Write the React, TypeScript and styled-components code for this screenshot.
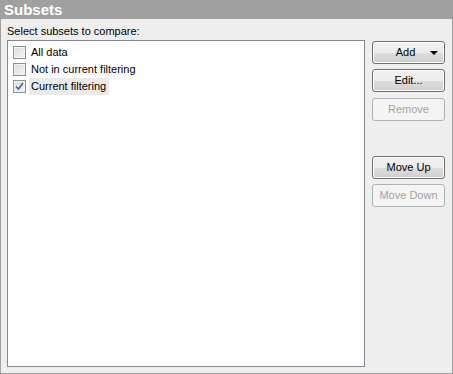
import styled, { createGlobalStyle } from "styled-components";

const GlobalStyle = createGlobalStyle`
  html, body {
    margin: 0;
    padding: 0;
    background: #ffffff;
  }
  body {
    font-family: "Liberation Sans", Arial, sans-serif;
    font-size: 11px;
    color: #000000;
  }
`;

const Panel = styled.div`
  width: 453px;
  height: 374px;
  display: flex;
  flex-direction: column;
  box-sizing: border-box;
`;

const Header = styled.div`
  height: 19px;
  background: #a0a0a0;
  color: #ffffff;
  font-weight: bold;
  font-size: 15px;
  line-height: 19px;
  padding-left: 4px;
  flex-shrink: 0;
`;

const Body = styled.div`
  flex: 1;
  display: flex;
  flex-direction: column;
  background: #eeeeee;
  border: 1px solid #a0a0a0;
  border-top: none;
  padding: 6px 7px 6px 6px;
  min-height: 0;
`;

const Caption = styled.div`
  line-height: 13px;
  margin-bottom: 2px;
`;

const Main = styled.div`
  flex: 1;
  display: flex;
  gap: 7px;
  min-height: 0;
`;

const ListBox = styled.div`
  flex: 1;
  background: #ffffff;
  border: 1px solid #828790;
  padding: 3px 0 0 5px;
  display: flex;
  flex-direction: column;
`;

const Row = styled.div`
  display: flex;
  align-items: center;
  height: 17px;
`;

const Box = styled.span`
  width: 13px;
  height: 13px;
  box-sizing: border-box;
  border: 1px solid #8e8f8f;
  background: linear-gradient(135deg, #dcdcdc 0%, #f4f4f4 100%);
  box-shadow: inset 0 0 0 1px #f4f4f4;
  display: flex;
  align-items: center;
  justify-content: center;
  flex-shrink: 0;
`;

const Label = styled.span<{ $focused?: boolean }>`
  margin-left: 3px;
  padding: 1px 3px 2px 2px;
  line-height: 14px;
  background: ${(p) => (p.$focused ? "#eaeaea" : "transparent")};
`;

const Buttons = styled.div`
  width: 73px;
  display: flex;
  flex-direction: column;
  padding-top: 1px;
`;

const Button = styled.div<{ $disabled?: boolean; $gap?: number }>`
  height: 23px;
  box-sizing: border-box;
  margin-top: ${(p) => p.$gap ?? 0}px;
  border: 1px solid ${(p) => (p.$disabled ? "#adb2b5" : "#707070")};
  border-radius: 3px;
  background: ${(p) =>
    p.$disabled
      ? "#f4f4f4"
      : "linear-gradient(#f2f2f2 0%, #ebebeb 50%, #dddddd 51%, #cfcfcf 100%)"};
  box-shadow: ${(p) => (p.$disabled ? "none" : "inset 0 0 0 1px #fcfcfc")};
  color: ${(p) => (p.$disabled ? "#a3a3a3" : "#000000")};
  display: flex;
  align-items: center;
  justify-content: center;
  position: relative;
  line-height: 13px;
`;

const Arrow = styled.svg`
  position: absolute;
  right: 6px;
  top: 9px;
`;

const items = [
  { label: "All data", checked: false },
  { label: "Not in current filtering", checked: false },
  { label: "Current filtering", checked: true },
];

export default function App() {
  return (
    <>
      <GlobalStyle />
      <Panel>
        <Header>Subsets</Header>
        <Body>
          <Caption>Select subsets to compare:</Caption>
          <Main>
            <ListBox>
              {items.map((item, i) => (
                <Row key={item.label}>
                  <Box>
                    {item.checked && (
                      <svg width="9" height="9" viewBox="0 0 9 9">
                        <path
                          d="M1 4.5 L3.5 7 L8 1"
                          fill="none"
                          stroke="#4a5f97"
                          strokeWidth="1.6"
                        />
                      </svg>
                    )}
                  </Box>
                  <Label $focused={i === items.length - 1}>{item.label}</Label>
                </Row>
              ))}
            </ListBox>
            <Buttons>
              <Button>
                <span style={{ marginRight: 6 }}>Add</span>
                <Arrow width="8" height="4" viewBox="0 0 8 4">
                  <path d="M0 0 H8 L4 4 Z" fill="#000000" />
                </Arrow>
              </Button>
              <Button $gap={5}>Edit...</Button>
              <Button $gap={6} $disabled>
                Remove
              </Button>
              <Button $gap={35}>Move Up</Button>
              <Button $gap={5} $disabled>
                Move Down
              </Button>
            </Buttons>
          </Main>
        </Body>
      </Panel>
    </>
  );
}
